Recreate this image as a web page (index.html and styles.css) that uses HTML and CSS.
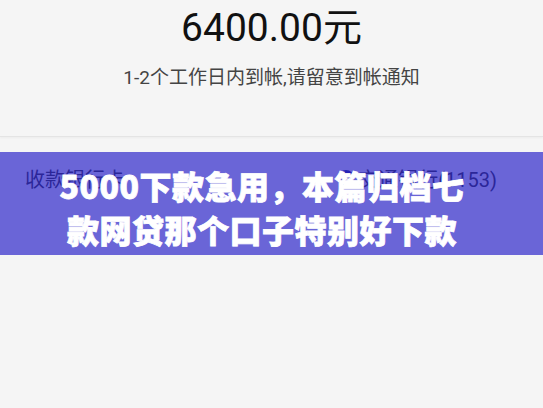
FILE: index.html
```html
<!DOCTYPE html>
<html lang="zh-CN">
<head>
    <meta charset="UTF-8">
    <meta name="viewport" content="width=device-width, initial-scale=1.0">
    <title>提现结果</title>
    <link rel="stylesheet" href="styles.css">
</head>
<body>
    <div class="result">
        <div class="amount">6400.00元</div>
        <div class="tip">1-2个工作日内到帐,请留意到帐通知</div>
    </div>
    <div class="card-row">
        <span class="label">收款银行卡</span>
        <span class="bank">
            <svg class="bank-icon" width="16" height="16" viewBox="0 0 16 16">
                <circle cx="8" cy="8" r="8" fill="#1f2a8c"/>
                <path d="M4 9.5c1.5 2 5 2.5 7.5 0.5" stroke="#fff" stroke-width="1.6" fill="none" stroke-linecap="round"/>
            </svg>
            交通银行(1153)
        </span>
    </div>

    <div class="banner">
        <p>5000下款急用，本篇归档七</p>
        <p>款网贷那个口子特别好下款</p>
    </div>
</body>
</html>
```

FILE: styles.css
```css
body {
    margin: 0;
    background-color: #f5f5f5;
    font-family: Roboto, "Noto Sans CJK SC", sans-serif;
    color: #222;
    position: relative;
    height: 408px;
    overflow: hidden;
}
.result {
    padding-top: 5px;
    height: 131px;
    border-bottom: 1px solid #e4e4e4;
    box-shadow: 0 1px 2px rgba(0, 0, 0, 0.04);
    text-align: center;
}
.amount {
    font-size: 39px;
    line-height: 46px;
    color: #111;
}
.tip {
    margin-top: 14px;
    font-size: 19px;
    line-height: 26px;
    color: #444;
}
.card-row {
    display: flex;
    justify-content: space-between;
    align-items: center;
    padding: 0 46px 0 25px;
    margin-top: 28px;
    height: 26px;
    font-size: 20px;
    color: #333;
}
.bank {
    display: flex;
    align-items: center;
    gap: 4px;
}
.banner {
    position: absolute;
    left: 0;
    right: 0;
    top: 152px;
    height: 103px;
    box-sizing: border-box;
    padding: 11px 19px 0 0;
    background: rgba(40, 32, 200, 0.68);
    text-align: center;
    color: #fff;
    font-family: "Noto Sans CJK SC", sans-serif;
    font-weight: 900;
    font-size: 32px;
    letter-spacing: 0.5px;
    -webkit-text-stroke: 0.8px #fff;
}
.banner p {
    margin: 0;
    line-height: 44px;
}
```
